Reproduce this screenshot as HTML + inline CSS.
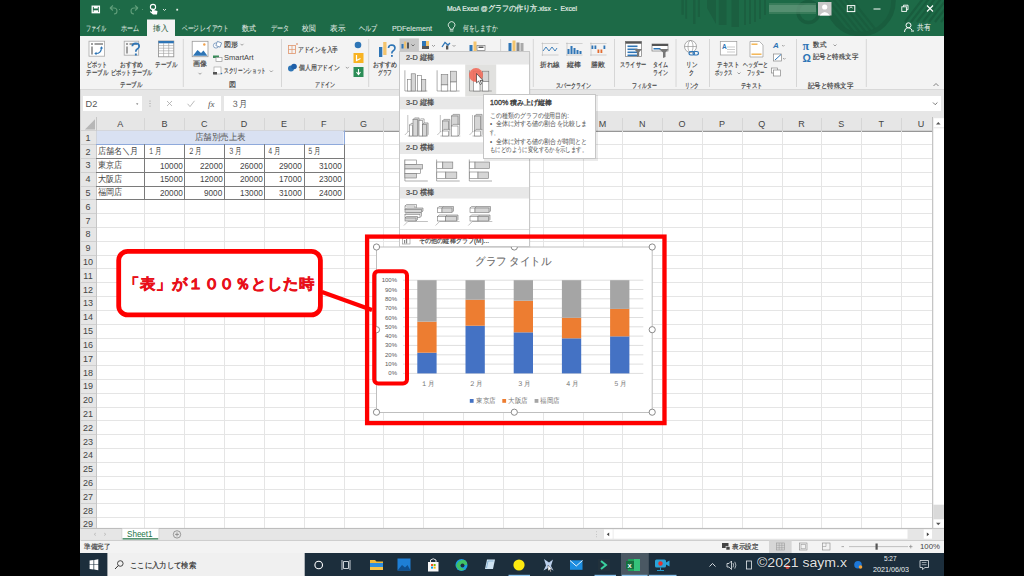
<!DOCTYPE html><html><head><meta charset="utf-8"><style>
*{margin:0;padding:0;box-sizing:border-box}
html,body{width:1024px;height:576px;overflow:hidden;background:#000}
body{position:relative;font-family:"Liberation Sans",sans-serif;color:#444}
.a{position:absolute}
.t{position:absolute;white-space:nowrap;line-height:1}
.f{display:inline-block;transform-origin:0 50%;-webkit-text-stroke:0.2px}
svg{position:absolute;overflow:visible}
</style></head><body>
<div class="a" style="left:80px;top:0;width:864px;height:36px;background:#1d6a47"></div>
<div class="a" style="left:80px;top:36px;width:864px;height:54px;background:#f3f3f3;border-bottom:1px solid #d8d8d8"></div>
<div class="a" style="left:80px;top:90px;width:864px;height:27px;background:#e6e6e6"></div>
<svg class="a" style="left:0;top:0" width="1024" height="576"><rect x="80" y="117" width="852.4" height="14.2" fill="#e6e6e6"/><rect x="80" y="117" width="16" height="411" fill="#e6e6e6"/><rect x="96.5" y="131.5" width="836" height="396.5" fill="#fff"/><line x1="144.5" y1="131" x2="144.5" y2="528" stroke="#e5e5e5" stroke-width="1"/><line x1="144.5" y1="118" x2="144.5" y2="130" stroke="#d6d6d6" stroke-width="1"/><line x1="184.5" y1="131" x2="184.5" y2="528" stroke="#e5e5e5" stroke-width="1"/><line x1="184.5" y1="118" x2="184.5" y2="130" stroke="#d6d6d6" stroke-width="1"/><line x1="224.5" y1="131" x2="224.5" y2="528" stroke="#e5e5e5" stroke-width="1"/><line x1="224.5" y1="118" x2="224.5" y2="130" stroke="#d6d6d6" stroke-width="1"/><line x1="264.5" y1="131" x2="264.5" y2="528" stroke="#e5e5e5" stroke-width="1"/><line x1="264.5" y1="118" x2="264.5" y2="130" stroke="#d6d6d6" stroke-width="1"/><line x1="304.5" y1="131" x2="304.5" y2="528" stroke="#e5e5e5" stroke-width="1"/><line x1="304.5" y1="118" x2="304.5" y2="130" stroke="#d6d6d6" stroke-width="1"/><line x1="344.5" y1="131" x2="344.5" y2="528" stroke="#e5e5e5" stroke-width="1"/><line x1="344.5" y1="118" x2="344.5" y2="130" stroke="#d6d6d6" stroke-width="1"/><line x1="383.5" y1="131" x2="383.5" y2="528" stroke="#e5e5e5" stroke-width="1"/><line x1="383.5" y1="118" x2="383.5" y2="130" stroke="#d6d6d6" stroke-width="1"/><line x1="423.5" y1="131" x2="423.5" y2="528" stroke="#e5e5e5" stroke-width="1"/><line x1="423.5" y1="118" x2="423.5" y2="130" stroke="#d6d6d6" stroke-width="1"/><line x1="463.5" y1="131" x2="463.5" y2="528" stroke="#e5e5e5" stroke-width="1"/><line x1="463.5" y1="118" x2="463.5" y2="130" stroke="#d6d6d6" stroke-width="1"/><line x1="503.5" y1="131" x2="503.5" y2="528" stroke="#e5e5e5" stroke-width="1"/><line x1="503.5" y1="118" x2="503.5" y2="130" stroke="#d6d6d6" stroke-width="1"/><line x1="543.5" y1="131" x2="543.5" y2="528" stroke="#e5e5e5" stroke-width="1"/><line x1="543.5" y1="118" x2="543.5" y2="130" stroke="#d6d6d6" stroke-width="1"/><line x1="583.5" y1="131" x2="583.5" y2="528" stroke="#e5e5e5" stroke-width="1"/><line x1="583.5" y1="118" x2="583.5" y2="130" stroke="#d6d6d6" stroke-width="1"/><line x1="622.5" y1="131" x2="622.5" y2="528" stroke="#e5e5e5" stroke-width="1"/><line x1="622.5" y1="118" x2="622.5" y2="130" stroke="#d6d6d6" stroke-width="1"/><line x1="662.5" y1="131" x2="662.5" y2="528" stroke="#e5e5e5" stroke-width="1"/><line x1="662.5" y1="118" x2="662.5" y2="130" stroke="#d6d6d6" stroke-width="1"/><line x1="702.5" y1="131" x2="702.5" y2="528" stroke="#e5e5e5" stroke-width="1"/><line x1="702.5" y1="118" x2="702.5" y2="130" stroke="#d6d6d6" stroke-width="1"/><line x1="742.5" y1="131" x2="742.5" y2="528" stroke="#e5e5e5" stroke-width="1"/><line x1="742.5" y1="118" x2="742.5" y2="130" stroke="#d6d6d6" stroke-width="1"/><line x1="782.5" y1="131" x2="782.5" y2="528" stroke="#e5e5e5" stroke-width="1"/><line x1="782.5" y1="118" x2="782.5" y2="130" stroke="#d6d6d6" stroke-width="1"/><line x1="821.5" y1="131" x2="821.5" y2="528" stroke="#e5e5e5" stroke-width="1"/><line x1="821.5" y1="118" x2="821.5" y2="130" stroke="#d6d6d6" stroke-width="1"/><line x1="861.5" y1="131" x2="861.5" y2="528" stroke="#e5e5e5" stroke-width="1"/><line x1="861.5" y1="118" x2="861.5" y2="130" stroke="#d6d6d6" stroke-width="1"/><line x1="901.5" y1="131" x2="901.5" y2="528" stroke="#e5e5e5" stroke-width="1"/><line x1="901.5" y1="118" x2="901.5" y2="130" stroke="#d6d6d6" stroke-width="1"/><line x1="96" y1="144.5" x2="932" y2="144.5" stroke="#e5e5e5" stroke-width="1"/><line x1="80" y1="144.5" x2="96" y2="144.5" stroke="#cfcfcf" stroke-width="1"/><line x1="96" y1="158.5" x2="932" y2="158.5" stroke="#e5e5e5" stroke-width="1"/><line x1="80" y1="158.5" x2="96" y2="158.5" stroke="#cfcfcf" stroke-width="1"/><line x1="96" y1="172.5" x2="932" y2="172.5" stroke="#e5e5e5" stroke-width="1"/><line x1="80" y1="172.5" x2="96" y2="172.5" stroke="#cfcfcf" stroke-width="1"/><line x1="96" y1="186.5" x2="932" y2="186.5" stroke="#e5e5e5" stroke-width="1"/><line x1="80" y1="186.5" x2="96" y2="186.5" stroke="#cfcfcf" stroke-width="1"/><line x1="96" y1="199.5" x2="932" y2="199.5" stroke="#e5e5e5" stroke-width="1"/><line x1="80" y1="199.5" x2="96" y2="199.5" stroke="#cfcfcf" stroke-width="1"/><line x1="96" y1="213.5" x2="932" y2="213.5" stroke="#e5e5e5" stroke-width="1"/><line x1="80" y1="213.5" x2="96" y2="213.5" stroke="#cfcfcf" stroke-width="1"/><line x1="96" y1="227.5" x2="932" y2="227.5" stroke="#e5e5e5" stroke-width="1"/><line x1="80" y1="227.5" x2="96" y2="227.5" stroke="#cfcfcf" stroke-width="1"/><line x1="96" y1="241.5" x2="932" y2="241.5" stroke="#e5e5e5" stroke-width="1"/><line x1="80" y1="241.5" x2="96" y2="241.5" stroke="#cfcfcf" stroke-width="1"/><line x1="96" y1="255.5" x2="932" y2="255.5" stroke="#e5e5e5" stroke-width="1"/><line x1="80" y1="255.5" x2="96" y2="255.5" stroke="#cfcfcf" stroke-width="1"/><line x1="96" y1="268.5" x2="932" y2="268.5" stroke="#e5e5e5" stroke-width="1"/><line x1="80" y1="268.5" x2="96" y2="268.5" stroke="#cfcfcf" stroke-width="1"/><line x1="96" y1="282.5" x2="932" y2="282.5" stroke="#e5e5e5" stroke-width="1"/><line x1="80" y1="282.5" x2="96" y2="282.5" stroke="#cfcfcf" stroke-width="1"/><line x1="96" y1="296.5" x2="932" y2="296.5" stroke="#e5e5e5" stroke-width="1"/><line x1="80" y1="296.5" x2="96" y2="296.5" stroke="#cfcfcf" stroke-width="1"/><line x1="96" y1="310.5" x2="932" y2="310.5" stroke="#e5e5e5" stroke-width="1"/><line x1="80" y1="310.5" x2="96" y2="310.5" stroke="#cfcfcf" stroke-width="1"/><line x1="96" y1="324.5" x2="932" y2="324.5" stroke="#e5e5e5" stroke-width="1"/><line x1="80" y1="324.5" x2="96" y2="324.5" stroke="#cfcfcf" stroke-width="1"/><line x1="96" y1="338.5" x2="932" y2="338.5" stroke="#e5e5e5" stroke-width="1"/><line x1="80" y1="338.5" x2="96" y2="338.5" stroke="#cfcfcf" stroke-width="1"/><line x1="96" y1="351.5" x2="932" y2="351.5" stroke="#e5e5e5" stroke-width="1"/><line x1="80" y1="351.5" x2="96" y2="351.5" stroke="#cfcfcf" stroke-width="1"/><line x1="96" y1="365.5" x2="932" y2="365.5" stroke="#e5e5e5" stroke-width="1"/><line x1="80" y1="365.5" x2="96" y2="365.5" stroke="#cfcfcf" stroke-width="1"/><line x1="96" y1="379.5" x2="932" y2="379.5" stroke="#e5e5e5" stroke-width="1"/><line x1="80" y1="379.5" x2="96" y2="379.5" stroke="#cfcfcf" stroke-width="1"/><line x1="96" y1="393.5" x2="932" y2="393.5" stroke="#e5e5e5" stroke-width="1"/><line x1="80" y1="393.5" x2="96" y2="393.5" stroke="#cfcfcf" stroke-width="1"/><line x1="96" y1="407.5" x2="932" y2="407.5" stroke="#e5e5e5" stroke-width="1"/><line x1="80" y1="407.5" x2="96" y2="407.5" stroke="#cfcfcf" stroke-width="1"/><line x1="96" y1="420.5" x2="932" y2="420.5" stroke="#e5e5e5" stroke-width="1"/><line x1="80" y1="420.5" x2="96" y2="420.5" stroke="#cfcfcf" stroke-width="1"/><line x1="96" y1="434.5" x2="932" y2="434.5" stroke="#e5e5e5" stroke-width="1"/><line x1="80" y1="434.5" x2="96" y2="434.5" stroke="#cfcfcf" stroke-width="1"/><line x1="96" y1="448.5" x2="932" y2="448.5" stroke="#e5e5e5" stroke-width="1"/><line x1="80" y1="448.5" x2="96" y2="448.5" stroke="#cfcfcf" stroke-width="1"/><line x1="96" y1="462.5" x2="932" y2="462.5" stroke="#e5e5e5" stroke-width="1"/><line x1="80" y1="462.5" x2="96" y2="462.5" stroke="#cfcfcf" stroke-width="1"/><line x1="96" y1="476.5" x2="932" y2="476.5" stroke="#e5e5e5" stroke-width="1"/><line x1="80" y1="476.5" x2="96" y2="476.5" stroke="#cfcfcf" stroke-width="1"/><line x1="96" y1="489.5" x2="932" y2="489.5" stroke="#e5e5e5" stroke-width="1"/><line x1="80" y1="489.5" x2="96" y2="489.5" stroke="#cfcfcf" stroke-width="1"/><line x1="96" y1="503.5" x2="932" y2="503.5" stroke="#e5e5e5" stroke-width="1"/><line x1="80" y1="503.5" x2="96" y2="503.5" stroke="#cfcfcf" stroke-width="1"/><line x1="96" y1="517.5" x2="932" y2="517.5" stroke="#e5e5e5" stroke-width="1"/><line x1="80" y1="517.5" x2="96" y2="517.5" stroke="#cfcfcf" stroke-width="1"/><line x1="96" y1="531.5" x2="932" y2="531.5" stroke="#e5e5e5" stroke-width="1"/><line x1="80" y1="531.5" x2="96" y2="531.5" stroke="#cfcfcf" stroke-width="1"/><line x1="80" y1="130.5" x2="932" y2="130.5" stroke="#d2d2d2" stroke-width="1"/><line x1="96.5" y1="117" x2="96.5" y2="528" stroke="#c6c6c6" stroke-width="1"/><line x1="80.5" y1="89" x2="80.5" y2="553" stroke="#cfcfcf" stroke-width="1"/><polygon points="95,119.3 95,129.5 84.9,129.5" fill="#b7b7b7"/></svg>
<div class="a" style="left:0;top:0;font-size:9px;color:#444">
<div class="t" style="left:96.0px;top:119.6px;width:48.5px;text-align:center">A</div>
<div class="t" style="left:144.5px;top:119.6px;width:39.8px;text-align:center">B</div>
<div class="t" style="left:184.3px;top:119.6px;width:39.8px;text-align:center">C</div>
<div class="t" style="left:224.1px;top:119.6px;width:39.8px;text-align:center">D</div>
<div class="t" style="left:264.0px;top:119.6px;width:39.8px;text-align:center">E</div>
<div class="t" style="left:303.8px;top:119.6px;width:39.8px;text-align:center">F</div>
<div class="t" style="left:343.6px;top:119.6px;width:39.8px;text-align:center">G</div>
<div class="t" style="left:383.4px;top:119.6px;width:39.8px;text-align:center">H</div>
<div class="t" style="left:423.2px;top:119.6px;width:39.8px;text-align:center">I</div>
<div class="t" style="left:463.1px;top:119.6px;width:39.8px;text-align:center">J</div>
<div class="t" style="left:502.9px;top:119.6px;width:39.8px;text-align:center">K</div>
<div class="t" style="left:542.7px;top:119.6px;width:39.8px;text-align:center">L</div>
<div class="t" style="left:582.5px;top:119.6px;width:39.8px;text-align:center">M</div>
<div class="t" style="left:622.3px;top:119.6px;width:39.8px;text-align:center">N</div>
<div class="t" style="left:662.2px;top:119.6px;width:39.8px;text-align:center">O</div>
<div class="t" style="left:702.0px;top:119.6px;width:39.8px;text-align:center">P</div>
<div class="t" style="left:741.8px;top:119.6px;width:39.8px;text-align:center">Q</div>
<div class="t" style="left:781.6px;top:119.6px;width:39.8px;text-align:center">R</div>
<div class="t" style="left:821.4px;top:119.6px;width:39.8px;text-align:center">S</div>
<div class="t" style="left:861.3px;top:119.6px;width:39.8px;text-align:center">T</div>
<div class="t" style="left:901.1px;top:119.6px;width:39.8px;text-align:center">U</div>
<div class="t" style="left:80px;top:133.7px;width:16px;text-align:center">1</div>
<div class="t" style="left:80px;top:147.5px;width:16px;text-align:center">2</div>
<div class="t" style="left:80px;top:161.3px;width:16px;text-align:center">3</div>
<div class="t" style="left:80px;top:175.1px;width:16px;text-align:center">4</div>
<div class="t" style="left:80px;top:188.9px;width:16px;text-align:center">5</div>
<div class="t" style="left:80px;top:202.8px;width:16px;text-align:center">6</div>
<div class="t" style="left:80px;top:216.6px;width:16px;text-align:center">7</div>
<div class="t" style="left:80px;top:230.4px;width:16px;text-align:center">8</div>
<div class="t" style="left:80px;top:244.2px;width:16px;text-align:center">9</div>
<div class="t" style="left:80px;top:258.0px;width:16px;text-align:center">10</div>
<div class="t" style="left:80px;top:271.8px;width:16px;text-align:center">11</div>
<div class="t" style="left:80px;top:285.6px;width:16px;text-align:center">12</div>
<div class="t" style="left:80px;top:299.4px;width:16px;text-align:center">13</div>
<div class="t" style="left:80px;top:313.2px;width:16px;text-align:center">14</div>
<div class="t" style="left:80px;top:327.0px;width:16px;text-align:center">15</div>
<div class="t" style="left:80px;top:340.9px;width:16px;text-align:center">16</div>
<div class="t" style="left:80px;top:354.7px;width:16px;text-align:center">17</div>
<div class="t" style="left:80px;top:368.5px;width:16px;text-align:center">18</div>
<div class="t" style="left:80px;top:382.3px;width:16px;text-align:center">19</div>
<div class="t" style="left:80px;top:396.1px;width:16px;text-align:center">20</div>
<div class="t" style="left:80px;top:409.9px;width:16px;text-align:center">21</div>
<div class="t" style="left:80px;top:423.7px;width:16px;text-align:center">22</div>
<div class="t" style="left:80px;top:437.5px;width:16px;text-align:center">23</div>
<div class="t" style="left:80px;top:451.3px;width:16px;text-align:center">24</div>
<div class="t" style="left:80px;top:465.1px;width:16px;text-align:center">25</div>
<div class="t" style="left:80px;top:478.9px;width:16px;text-align:center">26</div>
<div class="t" style="left:80px;top:492.8px;width:16px;text-align:center">27</div>
<div class="t" style="left:80px;top:506.6px;width:16px;text-align:center">28</div>
<div class="t" style="left:80px;top:520.4px;width:16px;text-align:center">29</div>
</div>
<svg class="a" style="left:0;top:0" width="1024" height="576"><rect x="96.5" y="130.7" width="247.1" height="13.5" fill="#d9e1f2"/><line x1="96" y1="144.5" x2="343.6" y2="144.5" stroke="#8ea9db" stroke-width="1"/><line x1="96" y1="158.5" x2="344.1" y2="158.5" stroke="#7a7a7a" stroke-width="1"/><line x1="96" y1="172.5" x2="344.1" y2="172.5" stroke="#7a7a7a" stroke-width="1"/><line x1="96" y1="186.5" x2="344.1" y2="186.5" stroke="#7a7a7a" stroke-width="1"/><line x1="96" y1="199.5" x2="344.1" y2="199.5" stroke="#7a7a7a" stroke-width="1"/><line x1="144.5" y1="144.2" x2="144.5" y2="199.9" stroke="#7a7a7a" stroke-width="1"/><line x1="184.5" y1="144.2" x2="184.5" y2="199.9" stroke="#7a7a7a" stroke-width="1"/><line x1="224.5" y1="144.2" x2="224.5" y2="199.9" stroke="#7a7a7a" stroke-width="1"/><line x1="264.5" y1="144.2" x2="264.5" y2="199.9" stroke="#7a7a7a" stroke-width="1"/><line x1="304.5" y1="144.2" x2="304.5" y2="199.9" stroke="#7a7a7a" stroke-width="1"/><line x1="344.5" y1="144.2" x2="344.5" y2="199.9" stroke="#7a7a7a" stroke-width="1"/><line x1="344.5" y1="130.4" x2="344.5" y2="144.2" stroke="#8ea9db" stroke-width="1"/></svg>
<span class="t f" style="transform:scaleX(0.9389);left:194.7px;top:133.1px;font-size:9px;color:#555;--w:50.7px;-webkit-text-stroke:0">店舗別売上表</span>
<span class="t f" style="transform:scaleX(0.9022);left:98.2px;top:146.9px;font-size:9px;color:#444;--w:40.6px;-webkit-text-stroke:0">店舗名＼月</span>
<span class="t f" style="transform:scaleX(0.7222);left:147.9px;top:146.9px;font-size:9px;color:#444;--w:13px;-webkit-text-stroke:0">１月</span>
<span class="t f" style="transform:scaleX(0.7222);left:187.7px;top:146.9px;font-size:9px;color:#444;--w:13px;-webkit-text-stroke:0">２月</span>
<span class="t f" style="transform:scaleX(0.7222);left:227.5px;top:146.9px;font-size:9px;color:#444;--w:13px;-webkit-text-stroke:0">３月</span>
<span class="t f" style="transform:scaleX(0.7222);left:267.4px;top:146.9px;font-size:9px;color:#444;--w:13px;-webkit-text-stroke:0">４月</span>
<span class="t f" style="transform:scaleX(0.7222);left:307.2px;top:146.9px;font-size:9px;color:#444;--w:13px;-webkit-text-stroke:0">５月</span>
<span class="t f" style="transform:scaleX(0.9000);left:98.2px;top:160.7px;font-size:9px;color:#444;--w:24.3px;-webkit-text-stroke:0">東京店</span>
<span class="t f" style="transform:scaleX(0.8743);left:159.8px;top:160.5px;font-size:9.4px;color:#444;--w:22.8px;-webkit-text-stroke:0">10000</span>
<span class="t f" style="transform:scaleX(0.8743);left:199.6px;top:160.5px;font-size:9.4px;color:#444;--w:22.8px;-webkit-text-stroke:0">22000</span>
<span class="t f" style="transform:scaleX(0.8743);left:239.5px;top:160.5px;font-size:9.4px;color:#444;--w:22.8px;-webkit-text-stroke:0">26000</span>
<span class="t f" style="transform:scaleX(0.8743);left:279.3px;top:160.5px;font-size:9.4px;color:#444;--w:22.8px;-webkit-text-stroke:0">29000</span>
<span class="t f" style="transform:scaleX(0.8743);left:319.1px;top:160.5px;font-size:9.4px;color:#444;--w:22.8px;-webkit-text-stroke:0">31000</span>
<span class="t f" style="transform:scaleX(0.9000);left:98.2px;top:174.5px;font-size:9px;color:#444;--w:24.3px;-webkit-text-stroke:0">大阪店</span>
<span class="t f" style="transform:scaleX(0.8743);left:159.8px;top:174.3px;font-size:9.4px;color:#444;--w:22.8px;-webkit-text-stroke:0">15000</span>
<span class="t f" style="transform:scaleX(0.8743);left:199.6px;top:174.3px;font-size:9.4px;color:#444;--w:22.8px;-webkit-text-stroke:0">12000</span>
<span class="t f" style="transform:scaleX(0.8743);left:239.5px;top:174.3px;font-size:9.4px;color:#444;--w:22.8px;-webkit-text-stroke:0">20000</span>
<span class="t f" style="transform:scaleX(0.8743);left:279.3px;top:174.3px;font-size:9.4px;color:#444;--w:22.8px;-webkit-text-stroke:0">17000</span>
<span class="t f" style="transform:scaleX(0.8743);left:319.1px;top:174.3px;font-size:9.4px;color:#444;--w:22.8px;-webkit-text-stroke:0">23000</span>
<span class="t f" style="transform:scaleX(0.9000);left:98.2px;top:188.3px;font-size:9px;color:#444;--w:24.3px;-webkit-text-stroke:0">福岡店</span>
<span class="t f" style="transform:scaleX(0.8743);left:159.8px;top:188.1px;font-size:9.4px;color:#444;--w:22.8px;-webkit-text-stroke:0">20000</span>
<span class="t f" style="transform:scaleX(0.8725);left:204.2px;top:188.1px;font-size:9.4px;color:#444;--w:18.2px;-webkit-text-stroke:0">9000</span>
<span class="t f" style="transform:scaleX(0.8743);left:239.5px;top:188.1px;font-size:9.4px;color:#444;--w:22.8px;-webkit-text-stroke:0">13000</span>
<span class="t f" style="transform:scaleX(0.8743);left:279.3px;top:188.1px;font-size:9.4px;color:#444;--w:22.8px;-webkit-text-stroke:0">31000</span>
<span class="t f" style="transform:scaleX(0.8743);left:319.1px;top:188.1px;font-size:9.4px;color:#444;--w:22.8px;-webkit-text-stroke:0">24000</span>
<svg class="a" style="left:0;top:0" width="1024" height="576"><rect x="376.5" y="247" width="275.7" height="165.5" fill="#fff" stroke="#bfbfbf" stroke-width="1"/><line x1="403" y1="373.4" x2="643.3" y2="373.4" stroke="#dedede" stroke-width="1"/><line x1="403" y1="364.1" x2="643.3" y2="364.1" stroke="#dedede" stroke-width="1"/><line x1="403" y1="354.8" x2="643.3" y2="354.8" stroke="#dedede" stroke-width="1"/><line x1="403" y1="345.4" x2="643.3" y2="345.4" stroke="#dedede" stroke-width="1"/><line x1="403" y1="336.1" x2="643.3" y2="336.1" stroke="#dedede" stroke-width="1"/><line x1="403" y1="326.8" x2="643.3" y2="326.8" stroke="#dedede" stroke-width="1"/><line x1="403" y1="317.5" x2="643.3" y2="317.5" stroke="#dedede" stroke-width="1"/><line x1="403" y1="308.2" x2="643.3" y2="308.2" stroke="#dedede" stroke-width="1"/><line x1="403" y1="298.8" x2="643.3" y2="298.8" stroke="#dedede" stroke-width="1"/><line x1="403" y1="289.5" x2="643.3" y2="289.5" stroke="#dedede" stroke-width="1"/><line x1="403" y1="280.2" x2="643.3" y2="280.2" stroke="#dedede" stroke-width="1"/><rect x="417.3" y="352.69" width="19.3" height="20.71" fill="#4472c4"/><rect x="417.3" y="321.62" width="19.3" height="31.07" fill="#ed7d31"/><rect x="417.3" y="280.20" width="19.3" height="41.42" fill="#a5a5a5"/><rect x="465.5" y="325.72" width="19.3" height="47.68" fill="#4472c4"/><rect x="465.5" y="299.71" width="19.3" height="26.01" fill="#ed7d31"/><rect x="465.5" y="280.20" width="19.3" height="19.51" fill="#a5a5a5"/><rect x="513.7" y="332.33" width="19.3" height="41.07" fill="#4472c4"/><rect x="513.7" y="300.74" width="19.3" height="31.59" fill="#ed7d31"/><rect x="513.7" y="280.20" width="19.3" height="20.54" fill="#a5a5a5"/><rect x="561.9" y="338.30" width="19.3" height="35.10" fill="#4472c4"/><rect x="561.9" y="317.72" width="19.3" height="20.58" fill="#ed7d31"/><rect x="561.9" y="280.20" width="19.3" height="37.52" fill="#a5a5a5"/><rect x="610.1" y="336.36" width="19.3" height="37.04" fill="#4472c4"/><rect x="610.1" y="308.88" width="19.3" height="27.48" fill="#ed7d31"/><rect x="610.1" y="280.20" width="19.3" height="28.68" fill="#a5a5a5"/><circle cx="376.5" cy="247" r="3.1" fill="#fff" stroke="#8a8a8a" stroke-width="1"/><circle cx="514.3" cy="247" r="3.1" fill="#fff" stroke="#8a8a8a" stroke-width="1"/><circle cx="652.2" cy="247" r="3.1" fill="#fff" stroke="#8a8a8a" stroke-width="1"/><circle cx="376.5" cy="329.7" r="3.1" fill="#fff" stroke="#8a8a8a" stroke-width="1"/><circle cx="652.2" cy="329.7" r="3.1" fill="#fff" stroke="#8a8a8a" stroke-width="1"/><circle cx="376.5" cy="412.2" r="3.1" fill="#fff" stroke="#8a8a8a" stroke-width="1"/><circle cx="514.3" cy="412.2" r="3.1" fill="#fff" stroke="#8a8a8a" stroke-width="1"/><circle cx="652.2" cy="412.2" r="3.1" fill="#fff" stroke="#8a8a8a" stroke-width="1"/></svg>
<div class="a" style="left:0;top:0;font-size:6px;color:#595959">
<span class="t f" style="transform:scaleX(0.9555);left:475.3px;top:255.9px;font-size:11px;color:#6a6a6a;--w:76.5px;-webkit-text-stroke:0.1px">グラフ タイトル</span>
<div class="t" style="left:370px;top:370.4px;width:27px;text-align:right">0%</div>
<div class="t" style="left:370px;top:361.1px;width:27px;text-align:right">10%</div>
<div class="t" style="left:370px;top:351.8px;width:27px;text-align:right">20%</div>
<div class="t" style="left:370px;top:342.4px;width:27px;text-align:right">30%</div>
<div class="t" style="left:370px;top:333.1px;width:27px;text-align:right">40%</div>
<div class="t" style="left:370px;top:323.8px;width:27px;text-align:right">50%</div>
<div class="t" style="left:370px;top:314.5px;width:27px;text-align:right">60%</div>
<div class="t" style="left:370px;top:305.2px;width:27px;text-align:right">70%</div>
<div class="t" style="left:370px;top:295.8px;width:27px;text-align:right">80%</div>
<div class="t" style="left:370px;top:286.5px;width:27px;text-align:right">90%</div>
<div class="t" style="left:370px;top:277.2px;width:27px;text-align:right">100%</div>
<span class="t f" style="transform:scaleX(0.9286);left:420.5px;top:380.3px;font-size:7px;color:#707070;--w:13px;-webkit-text-stroke:0">１月</span>
<span class="t f" style="transform:scaleX(0.9286);left:468.7px;top:380.3px;font-size:7px;color:#707070;--w:13px;-webkit-text-stroke:0">２月</span>
<span class="t f" style="transform:scaleX(0.9286);left:516.9px;top:380.3px;font-size:7px;color:#707070;--w:13px;-webkit-text-stroke:0">３月</span>
<span class="t f" style="transform:scaleX(0.9286);left:565.1px;top:380.3px;font-size:7px;color:#707070;--w:13px;-webkit-text-stroke:0">４月</span>
<span class="t f" style="transform:scaleX(0.9286);left:613.3px;top:380.3px;font-size:7px;color:#707070;--w:13px;-webkit-text-stroke:0">５月</span>
<svg class="a" style="left:0;top:0" width="1024" height="576"><rect x="469.8" y="399" width="3.8" height="3.8" fill="#4472c4"/><rect x="502.3" y="399" width="3.8" height="3.8" fill="#ed7d31"/><rect x="534.6" y="399" width="3.8" height="3.8" fill="#a5a5a5"/></svg>
<span class="t f" style="transform:scaleX(0.9286);left:476.0px;top:397.3px;font-size:7px;color:#777;--w:19.5px;-webkit-text-stroke:0">東京店</span>
<span class="t f" style="transform:scaleX(0.9286);left:508.0px;top:397.3px;font-size:7px;color:#777;--w:19.5px;-webkit-text-stroke:0">大阪店</span>
<span class="t f" style="transform:scaleX(0.9286);left:540.2px;top:397.3px;font-size:7px;color:#777;--w:19.5px;-webkit-text-stroke:0">福岡店</span>
</div>
<svg class="a" style="left:0;top:0" width="1024" height="576"><defs><clipPath id="tc"><rect x="80" y="0" width="864" height="36"/></clipPath><clipPath id="bc"><circle cx="860.5" cy="1" r="33"/></clipPath></defs><g clip-path="url(#tc)"><circle cx="860.5" cy="1" r="33" fill="#1b6443"/><g clip-path="url(#bc)" stroke="#195d3e" stroke-width="2.2"><line x1="796" y1="-10" x2="836" y2="40"/><line x1="802" y1="-10" x2="842" y2="40"/><line x1="808" y1="-10" x2="848" y2="40"/><line x1="814" y1="-10" x2="854" y2="40"/><line x1="820" y1="-10" x2="860" y2="40"/><line x1="826" y1="-10" x2="866" y2="40"/><line x1="832" y1="-10" x2="872" y2="40"/><line x1="838" y1="-10" x2="878" y2="40"/><line x1="844" y1="-10" x2="884" y2="40"/></g><circle cx="860.5" cy="1" r="33" fill="none" stroke="#195d3e" stroke-width="4.5"/><circle cx="808.5" cy="12" r="10.5" fill="none" stroke="#195d3e" stroke-width="3.5"/><g stroke="#195d3e" stroke-width="2.2"><line x1="905" y1="22" x2="925" y2="-4"/><line x1="911" y1="22" x2="931" y2="-4"/><line x1="917" y1="22" x2="937" y2="-4"/><line x1="923" y1="22" x2="943" y2="-4"/><line x1="929" y1="22" x2="949" y2="-4"/><line x1="935" y1="22" x2="955" y2="-4"/><line x1="941" y1="22" x2="961" y2="-4"/></g><g fill="#1b5f40"><rect x="681.4" y="0" width="2.4" height="14.8"/><rect x="685.3" y="0" width="1.8" height="18.8"/><rect x="693" y="0" width="2.5" height="24"/><rect x="697.8" y="0" width="2.2" height="17"/><path d="M707 0 H716 V24 L707 8Z"/><rect x="718.8" y="0" width="7.7" height="25"/><rect x="731.5" y="0" width="7.5" height="27"/><rect x="744" y="0" width="2" height="25"/><rect x="749" y="0" width="2" height="24"/><rect x="754" y="0" width="2" height="22"/><rect x="759" y="0" width="2" height="19"/><rect x="764" y="0" width="2" height="15"/></g></g><g fill="none" stroke="#fff" stroke-width="1.3"><rect x="92.2" y="6.2" width="7.2" height="6.5"/></g><rect x="93.8" y="6.2" width="4" height="2.3" fill="#fff"/><rect x="93.5" y="10.3" width="4.6" height="2.4" fill="#fff"/><path d="M110 8 L113 5.5 M110 8 L113 10.5 M110 8 H114 A3 3 0 0 1 114 14" fill="none" stroke="#5f9d79" stroke-width="1.1"/><path d="M138 8 L135 5.5 M138 8 L135 10.5 M138 8 H134 A3 3 0 0 0 134 14" fill="none" stroke="#5f9d79" stroke-width="1.1"/><circle cx="119.5" cy="9.5" r="0.6" fill="#5f9d79"/><circle cx="142.5" cy="9.5" r="0.6" fill="#5f9d79"/><circle cx="153" cy="7" r="2.6" fill="none" stroke="#fff" stroke-width="1.1"/><path d="M152 8 V12 L150.5 11 L150 12 L153 14.5 H157 L157.5 11 L153.5 10" fill="#fff"/><path d="M163 9 L164.5 10.5 L166 9" fill="none" stroke="#e8f0ea" stroke-width="0.9"/><rect x="176.3" y="8.8" width="1.8" height="1.8" fill="#e8f0ea"/><rect x="147" y="19.5" width="28" height="17" fill="#f3f3f3"/><rect x="769" y="3" width="47" height="11" fill="#4f8a69" opacity="0.55"/><rect x="769" y="5" width="47" height="7" fill="#7aa78e" opacity="0.45"/><rect x="818" y="2" width="13.5" height="13.5" fill="#c8c8c8"/><circle cx="824.7" cy="7" r="2.6" fill="#fff"/><path d="M819.5 15.5 Q824.7 8.5 830 15.5Z" fill="#fff"/><rect x="847.3" y="5.6" width="7.5" height="6" fill="none" stroke="#fff" stroke-width="1"/><path d="M849.5 8 L851 6.8 L852.5 8" fill="none" stroke="#fff" stroke-width="0.9"/><line x1="873.5" y1="9" x2="880.5" y2="9" stroke="#fff" stroke-width="1"/><rect x="901.8" y="6.8" width="4.6" height="4.6" fill="none" stroke="#fff" stroke-width="0.9"/><path d="M903.5 6.8 V5.2 H908 V9.7 H906.4" fill="none" stroke="#fff" stroke-width="0.9"/><path d="M927 5.5 L933 11.5 M933 5.5 L927 11.5" stroke="#fff" stroke-width="1.1"/><circle cx="908.5" cy="25.3" r="2.5" fill="none" stroke="#fff" stroke-width="1"/><path d="M904.5 32 Q905 27.5 908.5 27.8 Q911 28 912 30" fill="none" stroke="#fff" stroke-width="1"/><path d="M911 31 H914" stroke="#fff" stroke-width="1"/></svg>
<span class="t f" style="transform:scaleX(0.8878);left:447.0px;top:5.2px;font-size:7.6px;color:#e7efe9;--w:130px;">MoA Excel @グラフの作り方.xlsx&nbsp; -&nbsp; Excel</span>
<span class="t f" style="transform:scaleX(0.6312);left:86.4px;top:24.5px;font-size:7.6px;color:#e3ede6;--w:20.2px;-webkit-text-stroke:0.05px">ファイル</span>
<span class="t f" style="transform:scaleX(0.7542);left:120.8px;top:24.5px;font-size:7.6px;color:#e3ede6;--w:18.1px;-webkit-text-stroke:0.05px">ホーム</span>
<span class="t f" style="transform:scaleX(0.9375);left:153.0px;top:24.5px;font-size:7.6px;color:#2f5f43;--w:15px;-webkit-text-stroke:0.05px">挿入</span>
<span class="t f" style="transform:scaleX(0.7032);left:181.8px;top:24.5px;font-size:7.6px;color:#e3ede6;--w:46.5px;-webkit-text-stroke:0.05px">ページ レイアウト</span>
<span class="t f" style="transform:scaleX(0.8625);left:242.4px;top:24.5px;font-size:7.6px;color:#e3ede6;--w:13.8px;-webkit-text-stroke:0.05px">数式</span>
<span class="t f" style="transform:scaleX(0.7542);left:271.2px;top:24.5px;font-size:7.6px;color:#e3ede6;--w:18.1px;-webkit-text-stroke:0.05px">データ</span>
<span class="t f" style="transform:scaleX(0.8313);left:302.2px;top:24.5px;font-size:7.6px;color:#e3ede6;--w:13.3px;-webkit-text-stroke:0.05px">校閲</span>
<span class="t f" style="transform:scaleX(0.9375);left:330.0px;top:24.5px;font-size:7.6px;color:#e3ede6;--w:15px;-webkit-text-stroke:0.05px">表示</span>
<span class="t f" style="transform:scaleX(0.7542);left:359.3px;top:24.5px;font-size:7.6px;color:#e3ede6;--w:18.1px;-webkit-text-stroke:0.05px">ヘルプ</span>
<span class="t f" style="transform:scaleX(0.9451);left:391.6px;top:24.5px;font-size:7.6px;color:#e3ede6;--w:39.9px;-webkit-text-stroke:0.05px">PDFelement</span>
<span class="t f" style="transform:scaleX(0.7146);left:462.5px;top:24.5px;font-size:7.6px;color:#e3ede6;--w:34.3px;-webkit-text-stroke:0.05px">何をしますか</span>
<span class="t f" style="transform:scaleX(0.8438);left:917.0px;top:24.2px;font-size:7.6px;color:#eef4f0;--w:13.5px;-webkit-text-stroke:0.05px">共有</span>
<svg class="a" style="left:0;top:0" width="1024" height="576"><path d="M449.8 31 H453.4 M450 29.3 V28 Q447.6 26.3 448.3 24.2 Q449.3 21.6 451.6 21.6 Q454 21.6 454.9 24.2 Q455.5 26.3 453.2 28 V29.3 Z" fill="none" stroke="#e8f0ea" stroke-width="0.9"/></svg>
<svg class="a" style="left:0;top:0" width="1024" height="576"><line x1="183.3" y1="39" x2="183.3" y2="87" stroke="#d6d6d6" stroke-width="1"/><line x1="281.5" y1="39" x2="281.5" y2="87" stroke="#d6d6d6" stroke-width="1"/><line x1="368.7" y1="39" x2="368.7" y2="87" stroke="#d6d6d6" stroke-width="1"/><line x1="533.3" y1="39" x2="533.3" y2="87" stroke="#d6d6d6" stroke-width="1"/><line x1="614.5" y1="39" x2="614.5" y2="87" stroke="#d6d6d6" stroke-width="1"/><line x1="676" y1="39" x2="676" y2="87" stroke="#d6d6d6" stroke-width="1"/><line x1="709.5" y1="39" x2="709.5" y2="87" stroke="#d6d6d6" stroke-width="1"/><line x1="796.5" y1="39" x2="796.5" y2="87" stroke="#d6d6d6" stroke-width="1"/><line x1="866.3" y1="39" x2="866.3" y2="87" stroke="#d6d6d6" stroke-width="1"/><line x1="500.6" y1="39" x2="500.6" y2="51" stroke="#d6d6d6" stroke-width="1"/><rect x="89" y="41.2" width="15.6" height="15" fill="#fff" stroke="#a8a8a8" stroke-width="0.8"/><rect x="91" y="43" width="2" height="2" fill="#a0a0a0"/><rect x="94.5" y="43" width="8.5" height="2" fill="#a0a0a0"/><rect x="91" y="46.5" width="2" height="8" fill="#a0a0a0"/><path d="M96 53.5 Q101 53.5 101.5 48" fill="none" stroke="#2e75b6" stroke-width="1.2"/><path d="M94.3 53.5 L96.5 51.8 L96.5 55.2Z M101.5 46.2 L99.8 48.5 L103.2 48.5Z" fill="#2e75b6"/><rect x="124.2" y="41.2" width="14.5" height="14" fill="#f6f6f6" stroke="#a8a8a8" stroke-width="0.8"/><rect x="126" y="43" width="2" height="2" fill="#a0a0a0"/><rect x="129.5" y="43" width="7.5" height="2" fill="#a0a0a0"/><rect x="126" y="46.5" width="2" height="7" fill="#a0a0a0"/><path d="M132.3 46.3 Q132.5 43.4 135.8 43.4 Q139.2 43.5 139.2 46.3 Q139.2 48.2 137 49.3 Q135.8 50 135.8 51.8" fill="none" stroke="#2e75b6" stroke-width="1.7"/><rect x="134.9" y="53.5" width="1.9" height="2" fill="#2e75b6"/><rect x="158.5" y="41" width="15.3" height="15.8" fill="#fff" stroke="#8c8c8c" stroke-width="0.8"/><rect x="158.5" y="41" width="15.3" height="2.3" fill="#2e75b6"/><line x1="158.5" y1="45.6" x2="173.8" y2="45.6" stroke="#9c9c9c" stroke-width="0.6"/><line x1="158.5" y1="48.2" x2="173.8" y2="48.2" stroke="#9c9c9c" stroke-width="0.6"/><line x1="158.5" y1="50.8" x2="173.8" y2="50.8" stroke="#9c9c9c" stroke-width="0.6"/><line x1="158.5" y1="53.4" x2="173.8" y2="53.4" stroke="#9c9c9c" stroke-width="0.6"/><line x1="163.6" y1="43" x2="163.6" y2="56.8" stroke="#9c9c9c" stroke-width="0.6"/><line x1="168.7" y1="43" x2="168.7" y2="56.8" stroke="#9c9c9c" stroke-width="0.6"/><rect x="192.2" y="41.3" width="15.8" height="15.4" fill="#fff" stroke="#9a9a9a" stroke-width="0.8"/><path d="M193 55.8 L197.5 50 L201 53 L203.5 50.5 L207.4 55.8Z" fill="#2e75b6"/><circle cx="204.3" cy="44.5" r="1.2" fill="#f0a04b"/><circle cx="216" cy="45.5" r="2.6" fill="#fff" stroke="#6d8fb8" stroke-width="0.8"/><rect x="216.5" y="42" width="4.5" height="4.5" fill="#fff" stroke="#6d8fb8" stroke-width="0.8" transform="rotate(20 218.7 44.2)"/><rect x="213" y="55.5" width="6" height="2.5" fill="#3b8c5a"/><rect x="216" y="57.5" width="6" height="4" fill="#fff" stroke="#9a9a9a" stroke-width="0.7"/><rect x="214" y="67" width="7" height="7" fill="#fff" stroke="#9a9a9a" stroke-width="0.6"/><rect x="213" y="72" width="4" height="2.5" fill="#555"/><circle cx="221.5" cy="73.5" r="0.8" fill="#2e75b6"/><rect x="288.5" y="45.5" width="7" height="8" fill="none" stroke="#e0956b" stroke-width="0.8"/><line x1="292" y1="45.5" x2="292" y2="53.5" stroke="#e0956b" stroke-width="0.7"/><line x1="288.5" y1="49.5" x2="295.5" y2="49.5" stroke="#e0956b" stroke-width="0.7"/><path d="M296 44 H298 M297 43 V45" stroke="#e0956b" stroke-width="0.7"/><circle cx="291" cy="68.5" r="3" fill="#2e75b6"/><circle cx="294" cy="66.5" r="2.8" fill="#1f5fa8"/><circle cx="358" cy="45" r="3.3" fill="#2e75b6"/><rect x="353.5" y="53" width="10" height="10" fill="#f8b322"/><path d="M356.5 55 V60.5 L360.5 58.5" fill="none" stroke="#fff" stroke-width="1.2"/><rect x="353.5" y="67" width="10" height="10" fill="#2c8d57"/><path d="M358.5 69 V74 M356.5 72 L358.5 74.5 L360.5 72" fill="none" stroke="#fff" stroke-width="1.1"/><rect x="379" y="47" width="3.3" height="10" fill="#2e75b6"/><rect x="383.2" y="42" width="3.3" height="13" fill="#f3c46d"/><path d="M388.5 48 Q388.7 45 391.8 45 Q395 45.2 395 48 Q395 50 393 51 Q391.8 51.7 391.8 53.5" fill="none" stroke="#2e75b6" stroke-width="1.6"/><rect x="391" y="55" width="1.8" height="1.8" fill="#2e75b6"/><rect x="399.5" y="38.4" width="19.4" height="12.6" fill="#c8c8c8"/><rect x="401.5" y="44" width="2" height="4.5" fill="#2e75b6"/><rect x="404.2" y="41.5" width="2" height="7" fill="#f3c46d"/><rect x="407" y="42.5" width="2" height="6" fill="#555"/><path d="M411.5 44.5 L413 46 L414.5 44.5" fill="none" stroke="#555" stroke-width="0.8"/><rect x="422" y="41" width="4" height="8" fill="#2e75b6"/><rect x="426" y="41" width="3" height="8" fill="#f3c46d"/><rect x="422" y="46" width="7" height="3" fill="#555"/><path d="M432 45 L433.5 46.5 L435 45" fill="none" stroke="#888" stroke-width="0.8"/><path d="M442 47 L445 42.5 L448 45 L450 43" fill="none" stroke="#2e75b6" stroke-width="1.3"/><rect x="446" y="45.5" width="2.3" height="4" fill="#555"/><path d="M452.5 45 L454 46.5 L455.5 45" fill="none" stroke="#888" stroke-width="0.8"/><rect x="469.5" y="45" width="3" height="6" fill="#2e75b6"/><rect x="473.5" y="41.5" width="3" height="9.5" fill="#f3c46d"/><rect x="477" y="45.5" width="8" height="5" fill="#fff" stroke="#777" stroke-width="0.7"/><rect x="478.5" y="46.5" width="5" height="1.5" fill="#555"/><rect x="508.5" y="43" width="3" height="8" fill="#2e75b6"/><rect x="512.5" y="40.5" width="3" height="10.5" fill="#f3c46d"/><rect x="516.5" y="42.5" width="3" height="8.5" fill="#888"/><rect x="520.5" y="43" width="3" height="8" fill="#aaa"/><path d="M541.5 43.5 H558.5 M541.5 55 H558.5 M542.5 42.5 V56" stroke="#bbb" stroke-width="0.6"/><path d="M543 51 L546 47 L549 51 L552 47 L555 51 L557 48" fill="none" stroke="#2e75b6" stroke-width="0.9"/><path d="M566 43.5 H582.5 M566 55 H582.5 M567 42.5 V56" stroke="#bbb" stroke-width="0.6"/><rect x="567.5" y="49" width="2" height="5" fill="#2e75b6"/><rect x="570.5" y="46" width="2" height="8" fill="#2e75b6"/><rect x="573.5" y="48" width="2" height="6" fill="#2e75b6"/><rect x="576.5" y="50" width="2" height="4" fill="#2e75b6"/><rect x="579.5" y="51" width="2" height="3" fill="#2e75b6"/><path d="M590 43.5 H606.5 M590 55 H606.5 M591 42.5 V56" stroke="#bbb" stroke-width="0.6"/><rect x="591.5" y="45.5" width="1.8" height="3.5" fill="#2e75b6"/><rect x="594.5" y="45.5" width="1.8" height="3.5" fill="#2e75b6"/><rect x="597.5" y="49.5" width="1.8" height="3.5" fill="#e36c2f"/><rect x="600.5" y="49.5" width="1.8" height="3.5" fill="#e36c2f"/><rect x="603.5" y="45.5" width="1.8" height="3.5" fill="#2e75b6"/><rect x="625.5" y="41.5" width="16" height="15" fill="#fff" stroke="#777" stroke-width="0.7"/><rect x="625.5" y="41.5" width="16" height="2.2" fill="#555"/><rect x="627.5" y="45.5" width="10" height="1.6" fill="#2e75b6"/><rect x="627.5" y="48.5" width="10" height="1.6" fill="#2e75b6"/><rect x="627.5" y="51.5" width="10" height="1.6" fill="#2e75b6"/><rect x="627.5" y="54.5" width="10" height="1.6" fill="#2e75b6"/><path d="M634 49 H642 L639.2 52.3 V56 L637 57 V52.3Z" fill="#777"/><rect x="652" y="44" width="16" height="7" fill="#fff" stroke="#777" stroke-width="0.7"/><rect x="652" y="44" width="16" height="2" fill="#555"/><rect x="653.5" y="48" width="7" height="1.5" fill="#2e75b6"/><path d="M659 49 H668.5 L665.5 52.5 V57 L663 58 V52.5Z" fill="#777"/><circle cx="690.5" cy="46.5" r="6" fill="#fff" stroke="#888" stroke-width="0.7"/><ellipse cx="690.5" cy="46.5" rx="2.5" ry="6" fill="none" stroke="#888" stroke-width="0.6"/><line x1="684.5" y1="46.5" x2="696.5" y2="46.5" stroke="#888" stroke-width="0.6"/><rect x="689" y="51.5" width="5.5" height="3.5" rx="1.7" fill="none" stroke="#2e75b6" stroke-width="1.2"/><rect x="693" y="51.5" width="5.5" height="3.5" rx="1.7" fill="none" stroke="#2e75b6" stroke-width="1.2"/><rect x="720.3" y="41.5" width="16.5" height="13.5" fill="#fff" stroke="#999" stroke-width="0.7"/><text x="722" y="49" font-size="6.5" font-weight="bold" fill="#2e75b6" font-family="Liberation Sans">A</text><line x1="727" y1="47" x2="735" y2="47" stroke="#aaa" stroke-width="0.6"/><line x1="727" y1="49.5" x2="735" y2="49.5" stroke="#aaa" stroke-width="0.6"/><line x1="727" y1="52" x2="735" y2="52" stroke="#aaa" stroke-width="0.6"/><path d="M750 41.5 H759.5 L763 45 V57 H750Z" fill="#fff" stroke="#999" stroke-width="0.7"/><rect x="751.5" y="43.5" width="6" height="1.4" fill="#f3b14a"/><rect x="751.5" y="53.5" width="10" height="1.4" fill="#f3b14a"/><text x="773" y="48" font-size="8" font-style="italic" font-weight="bold" fill="#2e75b6" font-family="Liberation Sans">A</text><rect x="773.5" y="54" width="8" height="7" fill="#fff" stroke="#888" stroke-width="0.7"/><path d="M775 60 L781 54.5" stroke="#2e75b6" stroke-width="1"/><rect x="771.5" y="68" width="6" height="5" fill="#fff" stroke="#888" stroke-width="0.7"/><rect x="773.5" y="70" width="7" height="6" fill="#fff" stroke="#888" stroke-width="0.7"/><path d="M782 45 L783.3 46.3 L784.6 45" fill="none" stroke="#888" stroke-width="0.7"/><path d="M783 58 L784.3 59.3 L785.6 58" fill="none" stroke="#888" stroke-width="0.7"/><text x="802.5" y="49.5" font-size="12" font-weight="bold" fill="#2e75b6" font-family="Liberation Serif">π</text><text x="802.5" y="61.5" font-size="10.5" font-weight="bold" fill="#2e75b6" font-family="Liberation Sans">Ω</text><path d="M933.5 86 L936 83.5 L938.5 86" fill="none" stroke="#666" stroke-width="0.8"/></svg>
<span class="t f" style="transform:scaleX(0.7143);left:86.5px;top:60.8px;font-size:7.4px;color:#444;--w:20px;">ピボット</span>
<span class="t f" style="transform:scaleX(0.7857);left:85.7px;top:69.3px;font-size:7.4px;color:#444;--w:22px;">テーブル</span>
<span class="t f" style="transform:scaleX(0.8214);left:120.0px;top:60.8px;font-size:7.4px;color:#444;--w:23px;">おすすめ</span>
<span class="t f" style="transform:scaleX(0.7321);left:110.8px;top:69.3px;font-size:7.4px;color:#444;--w:41px;">ピボットテーブル</span>
<span class="t f" style="transform:scaleX(0.7857);left:155.0px;top:60.8px;font-size:7.4px;color:#444;--w:22px;">テーブル</span>
<span class="t f" style="transform:scaleX(0.7857);left:120.3px;top:81.3px;font-size:7.4px;color:#444;--w:22px;">テーブル</span>
<span class="t f" style="transform:scaleX(1.0000);left:193.0px;top:60.3px;font-size:7.4px;color:#444;--w:14px;">画像</span>
<svg class="a" style="left:0;top:0" width="1024" height="576"><path d="M198.5 72.8 L200 74.3 L201.5 72.8" fill="none" stroke="#888" stroke-width="0.8"/></svg>
<span class="t f" style="transform:scaleX(1.0000);left:224.0px;top:40.6px;font-size:7.4px;color:#444;--w:14px;">図形</span>
<span class="t f" style="transform:scaleX(1.0152);left:224.0px;top:54.3px;font-size:7.4px;color:#444;--w:29.6px;;-webkit-text-stroke:0">SmartArt</span>
<span class="t f" style="transform:scaleX(0.6667);left:224.0px;top:67.3px;font-size:7.4px;color:#444;--w:42px;">スクリーンショット</span>
<svg class="a" style="left:0;top:0" width="1024" height="576"><path d="M240.5 43.8 L242 45.3 L243.5 43.8" fill="none" stroke="#888" stroke-width="0.8"/></svg>
<svg class="a" style="left:0;top:0" width="1024" height="576"><path d="M269.8 70.5 L271.3 72.0 L272.8 70.5" fill="none" stroke="#888" stroke-width="0.8"/></svg>
<svg class="a" style="left:0;top:0" width="1024" height="576"><path d="M345.8 66.89999999999999 L347.3 68.39999999999999 L348.8 66.89999999999999" fill="none" stroke="#888" stroke-width="0.8"/></svg>
<span class="t f" style="transform:scaleX(1.0000);left:228.8px;top:81.3px;font-size:7.4px;color:#444;--w:7px;">図</span>
<span class="t f" style="transform:scaleX(0.8163);left:298.0px;top:46.2px;font-size:7.4px;color:#444;--w:40px;">アドインを入手</span>
<span class="t f" style="transform:scaleX(0.8367);left:299.0px;top:63.8px;font-size:7.4px;color:#444;--w:41px;">個人用アドイン</span>
<span class="t f" style="transform:scaleX(0.7143);left:315.0px;top:81.3px;font-size:7.4px;color:#444;--w:20px;">アドイン</span>
<span class="t f" style="transform:scaleX(0.8571);left:373.0px;top:60.8px;font-size:7.4px;color:#444;--w:24px;">おすすめ</span>
<span class="t f" style="transform:scaleX(0.6667);left:378.0px;top:69.3px;font-size:7.4px;color:#444;--w:14px;">グラフ</span>
<span class="t f" style="transform:scaleX(0.9524);left:540.0px;top:60.7px;font-size:7.4px;color:#444;--w:20px;">折れ線</span>
<span class="t f" style="transform:scaleX(1.0000);left:567.0px;top:60.7px;font-size:7.4px;color:#444;--w:14px;">縦棒</span>
<span class="t f" style="transform:scaleX(1.0000);left:591.0px;top:60.7px;font-size:7.4px;color:#444;--w:14px;">勝敗</span>
<span class="t f" style="transform:scaleX(0.7224);left:556.0px;top:81.7px;font-size:7.4px;color:#444;--w:35.4px;">スパークライン</span>
<span class="t f" style="transform:scaleX(0.7429);left:620.0px;top:60.7px;font-size:7.4px;color:#444;--w:26px;">スライサー</span>
<span class="t f" style="transform:scaleX(0.7143);left:653.0px;top:60.7px;font-size:7.4px;color:#444;--w:15px;">タイム</span>
<span class="t f" style="transform:scaleX(0.7143);left:653.0px;top:69.3px;font-size:7.4px;color:#444;--w:15px;">ライン</span>
<span class="t f" style="transform:scaleX(0.7057);left:632.2px;top:81.5px;font-size:7.4px;color:#444;--w:24.7px;">フィルター</span>
<span class="t f" style="transform:scaleX(0.7857);left:686.0px;top:60.7px;font-size:7.4px;color:#444;--w:11px;">リン</span>
<span class="t f" style="transform:scaleX(0.7143);left:689.0px;top:69.3px;font-size:7.4px;color:#444;--w:5px;">ク</span>
<span class="t f" style="transform:scaleX(0.6667);left:685.0px;top:81.5px;font-size:7.4px;color:#444;--w:14px;">リンク</span>
<span class="t f" style="transform:scaleX(0.7857);left:717.0px;top:60.6px;font-size:7.4px;color:#444;--w:22px;">テキスト</span>
<span class="t f" style="transform:scaleX(0.6071);left:715.0px;top:69.3px;font-size:7.4px;color:#444;--w:17px;">ボックス</span>
<svg class="a" style="left:0;top:0" width="1024" height="576"><path d="M737.5 72.5 L739 74.0 L740.5 72.5" fill="none" stroke="#888" stroke-width="0.8"/></svg>
<span class="t f" style="transform:scaleX(0.7143);left:743.0px;top:60.6px;font-size:7.4px;color:#444;--w:25px;">ヘッダーと</span>
<span class="t f" style="transform:scaleX(0.6071);left:747.0px;top:69.3px;font-size:7.4px;color:#444;--w:17px;">フッター</span>
<span class="t f" style="transform:scaleX(0.7643);left:741.3px;top:81.5px;font-size:7.4px;color:#444;--w:21.4px;">テキスト</span>
<span class="t f" style="transform:scaleX(0.9286);left:813.0px;top:41.3px;font-size:7.4px;color:#444;--w:13px;">数式</span>
<svg class="a" style="left:0;top:0" width="1024" height="576"><path d="M833.5 44.5 L835 46.0 L836.5 44.5" fill="none" stroke="#888" stroke-width="0.8"/></svg>
<span class="t f" style="transform:scaleX(0.9265);left:813.0px;top:53.3px;font-size:7.4px;color:#444;--w:45.4px;">記号と特殊文字</span>
<span class="t f" style="transform:scaleX(0.9245);left:808.4px;top:81.5px;font-size:7.4px;color:#444;--w:45.3px;">記号と特殊文字</span>
<div class="a" style="left:83px;top:96.2px;width:58.5px;height:15px;background:#fff"></div>
<div class="a" style="left:159.7px;top:96.2px;width:61.3px;height:15px;background:#fff"></div>
<div class="a" style="left:224px;top:96.2px;width:717.3px;height:15px;background:#fff"></div>
<div class="t" style="left:85.5px;top:99.5px;font-size:9.2px;color:#555">D2</div>
<span class="t f" style="transform:scaleX(0.9167);left:231.2px;top:99.7px;font-size:8.6px;color:#555;--w:16.5px;-webkit-text-stroke:0">３月</span>
<svg class="a" style="left:0;top:0" width="1024" height="576"><path d="M136 103.5 L137.2 104.7 L138.4 103.5Z" fill="#555"/><circle cx="150" cy="101" r="0.5" fill="#888"/><circle cx="150" cy="103.5" r="0.5" fill="#888"/><circle cx="150" cy="106" r="0.5" fill="#888"/><path d="M167 101 L172 106 M172 101 L167 106" stroke="#aaa" stroke-width="0.8"/><path d="M187.6 103.8 L190 106.6 L194.5 100.8" fill="none" stroke="#aaa" stroke-width="0.8"/><text x="208" y="107.2" font-size="9" font-style="italic" fill="#555" font-family="Liberation Serif">fx</text><path d="M933 102.5 L935.2 104.7 L937.4 102.5" fill="none" stroke="#666" stroke-width="0.9"/></svg>
<svg class="a" style="left:0;top:0" width="1024" height="576"><rect x="400.5" y="52.5" width="130" height="195" fill="#000" opacity="0.06"/><rect x="399.5" y="51.5" width="130" height="195" fill="#fff" stroke="#c8c8c8" stroke-width="1"/><rect x="400" y="52" width="129" height="12.5" fill="#e8e8e8"/><rect x="400" y="96.8" width="129" height="12.5" fill="#e8e8e8"/><rect x="400" y="142.3" width="129" height="11.7" fill="#e8e8e8"/><rect x="400" y="187" width="129" height="11.5" fill="#e8e8e8"/><line x1="400" y1="229.5" x2="529" y2="229.5" stroke="#e0e0e0" stroke-width="1"/><rect x="465.2" y="64.4" width="31" height="32.2" fill="#e1e1df"/><path d="M404.9 70.3 V91 H427.3" fill="none" stroke="#777" stroke-width="0.6"/><rect x="407.3" y="79.3" width="3.8" height="11.7" fill="#fff" stroke="#777" stroke-width="0.6"/><rect x="411.2" y="73.8" width="4.4" height="17.2" fill="#d6d6d6" stroke="#777" stroke-width="0.6"/><rect x="417.6" y="75.3" width="3.9" height="15.7" fill="#fff" stroke="#777" stroke-width="0.6"/><rect x="421.5" y="79.3" width="4.3" height="11.7" fill="#d6d6d6" stroke="#777" stroke-width="0.6"/><path d="M437.1 70.3 V91 H459.6" fill="none" stroke="#777" stroke-width="0.6"/><rect x="441.2" y="74.6" width="6.6" height="10.3" fill="#d6d6d6" stroke="#777" stroke-width="0.6"/><rect x="441.2" y="84.9" width="6.6" height="6.1" fill="#fff" stroke="#777" stroke-width="0.6"/><rect x="450.3" y="71.2" width="6.3" height="10.8" fill="#d6d6d6" stroke="#777" stroke-width="0.6"/><rect x="450.3" y="82" width="6.3" height="9" fill="#fff" stroke="#777" stroke-width="0.6"/><path d="M469.5 70.3 V91 H491.8" fill="none" stroke="#777" stroke-width="0.6"/><rect x="473.4" y="71.2" width="6.6" height="9" fill="#d6d6d6" stroke="#777" stroke-width="0.6"/><rect x="473.4" y="80.2" width="6.6" height="10.8" fill="#fff" stroke="#777" stroke-width="0.6"/><rect x="482.4" y="71.2" width="6.4" height="10.3" fill="#d6d6d6" stroke="#777" stroke-width="0.6"/><rect x="482.4" y="81.5" width="6.4" height="9.5" fill="#fff" stroke="#777" stroke-width="0.6"/><path d="M407.8 115 V132 M404.8 135 L408.8 131 M407.8 136 H427.8" fill="none" stroke="#999" stroke-width="0.6"/><path d="M440.3 115 V132 M437.3 135 L441.3 131 M440.3 136 H460.3" fill="none" stroke="#999" stroke-width="0.6"/><path d="M472.5 115 V132 M469.5 135 L473.5 131 M472.5 136 H492.5" fill="none" stroke="#999" stroke-width="0.6"/><path d="M409.5 125 L411.1 123.4 H414.1 V134.4 L412.5 136" fill="#fff" stroke="#777" stroke-width="0.6"/><rect x="409.5" y="125" width="3" height="11" fill="#fff" stroke="#777" stroke-width="0.6"/><path d="M413 119.5 L414.6 117.9 H419.1 V134.4 L417.5 136.0" fill="#d6d6d6" stroke="#777" stroke-width="0.6"/><rect x="413" y="119.5" width="4.5" height="16.5" fill="#d6d6d6" stroke="#777" stroke-width="0.6"/><path d="M419 120.5 L420.6 118.9 H424.1 V134.4 L422.5 136.0" fill="#fff" stroke="#777" stroke-width="0.6"/><rect x="419" y="120.5" width="3.5" height="15.5" fill="#fff" stroke="#777" stroke-width="0.6"/><path d="M422.5 124.5 L424.1 122.9 H428.1 V134.4 L426.5 136.0" fill="#d6d6d6" stroke="#777" stroke-width="0.6"/><rect x="422.5" y="124.5" width="4" height="11.5" fill="#d6d6d6" stroke="#777" stroke-width="0.6"/><path d="M442.3 121 L443.90000000000003 119.4 H449.90000000000003 V129.4 L448.3 131" fill="#d6d6d6" stroke="#777" stroke-width="0.6"/><rect x="442.3" y="121" width="6" height="10" fill="#d6d6d6" stroke="#777" stroke-width="0.6"/><path d="M442.3 131 L443.90000000000003 129.4 H449.90000000000003 V134.4 L448.3 136" fill="#fff" stroke="#777" stroke-width="0.6"/><rect x="442.3" y="131" width="6" height="5" fill="#fff" stroke="#777" stroke-width="0.6"/><path d="M451.5 116 L453.1 114.4 H459.6 V124.4 L458.0 126" fill="#d6d6d6" stroke="#777" stroke-width="0.6"/><rect x="451.5" y="116" width="6.5" height="10" fill="#d6d6d6" stroke="#777" stroke-width="0.6"/><path d="M451.5 126 L453.1 124.4 H459.6 V134.4 L458.0 136" fill="#fff" stroke="#777" stroke-width="0.6"/><rect x="451.5" y="126" width="6.5" height="10" fill="#fff" stroke="#777" stroke-width="0.6"/><path d="M474.5 116 L476.1 114.4 H482.1 V129.4 L480.5 131" fill="#d6d6d6" stroke="#777" stroke-width="0.6"/><rect x="474.5" y="116" width="6" height="15" fill="#d6d6d6" stroke="#777" stroke-width="0.6"/><path d="M474.5 131 L476.1 129.4 H482.1 V134.4 L480.5 136" fill="#fff" stroke="#777" stroke-width="0.6"/><rect x="474.5" y="131" width="6" height="5" fill="#fff" stroke="#777" stroke-width="0.6"/><path d="M404.9 159.5 V181 H427.8" fill="none" stroke="#777" stroke-width="0.6"/><rect x="404.9" y="160" width="11.6" height="4.5" fill="#fff" stroke="#777" stroke-width="0.6"/><rect x="404.9" y="164.5" width="17.6" height="4.5" fill="#d6d6d6" stroke="#777" stroke-width="0.6"/><rect x="404.9" y="169" width="15.6" height="4.5" fill="#fff" stroke="#777" stroke-width="0.6"/><rect x="404.9" y="173.5" width="11.6" height="4.5" fill="#d6d6d6" stroke="#777" stroke-width="0.6"/><path d="M436.6 159.5 V181 H459.7" fill="none" stroke="#777" stroke-width="0.6"/><rect x="436.8" y="162" width="6" height="6.5" fill="#fff" stroke="#777" stroke-width="0.6"/><rect x="442.8" y="162" width="10" height="6.5" fill="#d6d6d6" stroke="#777" stroke-width="0.6"/><rect x="436.8" y="172" width="9" height="6.5" fill="#fff" stroke="#777" stroke-width="0.6"/><rect x="445.8" y="172" width="11" height="6.5" fill="#d6d6d6" stroke="#777" stroke-width="0.6"/><path d="M469.3 159.5 V181 H492" fill="none" stroke="#777" stroke-width="0.6"/><rect x="469.5" y="162" width="5.5" height="6.5" fill="#fff" stroke="#777" stroke-width="0.6"/><rect x="475" y="162" width="14.5" height="6.5" fill="#d6d6d6" stroke="#777" stroke-width="0.6"/><rect x="469.5" y="172" width="8.5" height="6.5" fill="#fff" stroke="#777" stroke-width="0.6"/><rect x="478" y="172" width="10.5" height="6.5" fill="#d6d6d6" stroke="#777" stroke-width="0.6"/><path d="M403.9 225.5 L407.9 221.5 H427.9" fill="none" stroke="#999" stroke-width="0.6"/><path d="M435.6 225.5 L439.6 221.5 H459.6" fill="none" stroke="#999" stroke-width="0.6"/><path d="M468.3 225.5 L472.3 221.5 H492.3" fill="none" stroke="#999" stroke-width="0.6"/><path d="M405 206 L406.5 204.5 H416.5 V207.5 L415 209" fill="#fff" stroke="#777" stroke-width="0.6"/><rect x="405" y="206" width="10" height="3" fill="#fff" stroke="#777" stroke-width="0.6"/><path d="M405 209.5 L406.5 208.0 H423.0 V211.0 L421.5 212.5" fill="#d6d6d6" stroke="#777" stroke-width="0.6"/><rect x="405" y="209.5" width="16.5" height="3" fill="#d6d6d6" stroke="#777" stroke-width="0.6"/><path d="M405 214.5 L406.5 213.0 H421.5 V216.0 L420 217.5" fill="#fff" stroke="#777" stroke-width="0.6"/><rect x="405" y="214.5" width="15" height="3" fill="#fff" stroke="#777" stroke-width="0.6"/><path d="M405 218 L406.5 216.5 H417.5 V219.5 L416 221" fill="#d6d6d6" stroke="#777" stroke-width="0.6"/><rect x="405" y="218" width="11" height="3" fill="#d6d6d6" stroke="#777" stroke-width="0.6"/><path d="M437.5 208 L439.0 206.5 H443.5 V211.0 L442.0 212.5" fill="#fff" stroke="#777" stroke-width="0.6"/><rect x="437.5" y="208" width="4.5" height="4.5" fill="#fff" stroke="#777" stroke-width="0.6"/><path d="M442 208 L443.5 206.5 H453.5 V211.0 L452 212.5" fill="#d6d6d6" stroke="#777" stroke-width="0.6"/><rect x="442" y="208" width="10" height="4.5" fill="#d6d6d6" stroke="#777" stroke-width="0.6"/><path d="M437.5 216.5 L439.0 215.0 H447.0 V219.5 L445.5 221.0" fill="#fff" stroke="#777" stroke-width="0.6"/><rect x="437.5" y="216.5" width="8" height="4.5" fill="#fff" stroke="#777" stroke-width="0.6"/><path d="M445.5 216.5 L447.0 215.0 H458.0 V219.5 L456.5 221.0" fill="#d6d6d6" stroke="#777" stroke-width="0.6"/><rect x="445.5" y="216.5" width="11" height="4.5" fill="#d6d6d6" stroke="#777" stroke-width="0.6"/><path d="M470 208 L471.5 206.5 H476.5 V211.0 L475 212.5" fill="#fff" stroke="#777" stroke-width="0.6"/><rect x="470" y="208" width="5" height="4.5" fill="#fff" stroke="#777" stroke-width="0.6"/><path d="M475 208 L476.5 206.5 H490.5 V211.0 L489 212.5" fill="#d6d6d6" stroke="#777" stroke-width="0.6"/><rect x="475" y="208" width="14" height="4.5" fill="#d6d6d6" stroke="#777" stroke-width="0.6"/><path d="M470 216.5 L471.5 215.0 H479.5 V219.5 L478 221.0" fill="#fff" stroke="#777" stroke-width="0.6"/><rect x="470" y="216.5" width="8" height="4.5" fill="#fff" stroke="#777" stroke-width="0.6"/><path d="M478 216.5 L479.5 215.0 H490.0 V219.5 L488.5 221.0" fill="#d6d6d6" stroke="#777" stroke-width="0.6"/><rect x="478" y="216.5" width="10.5" height="4.5" fill="#d6d6d6" stroke="#777" stroke-width="0.6"/><rect x="402.5" y="238" width="7.5" height="6" fill="#fff" stroke="#888" stroke-width="0.6"/><rect x="404" y="240" width="1.2" height="3.5" fill="#888"/><rect x="406" y="239" width="1.2" height="4.5" fill="#888"/><circle cx="476" cy="75.1" r="7" fill="#f26b5b" opacity="0.9"/><path d="M476.5 73.5 V83 L478.6 81 L480.2 84.5 L481.6 83.8 L480 80.5 H483 Z" fill="#fff" stroke="#222" stroke-width="0.6"/></svg>
<span class="t f" style="transform:scaleX(0.9124);left:405.8px;top:54.3px;font-size:8px;color:#444;--w:28.4px;">2-D 縦棒</span>
<span class="t f" style="transform:scaleX(0.9124);left:405.8px;top:99.0px;font-size:8px;color:#444;--w:28.4px;">3-D 縦棒</span>
<span class="t f" style="transform:scaleX(0.9124);left:405.8px;top:144.2px;font-size:8px;color:#444;--w:28.4px;">2-D 横棒</span>
<span class="t f" style="transform:scaleX(0.9124);left:405.8px;top:188.8px;font-size:8px;color:#444;--w:28.4px;">3-D 横棒</span>
<span class="t f" style="transform:scaleX(0.8723);left:419.0px;top:237.3px;font-size:7.4px;color:#444;--w:70px;">その他の縦棒グラフ(M)...</span>
<div class="a" style="left:483.5px;top:95px;width:114px;height:66px;background:#000;opacity:0.08"></div>
<div class="a" style="left:482.6px;top:94px;width:113.4px;height:65px;background:#fff;border:1px solid #c6c6c6"></div>
<span class="t f" style="transform:scaleX(0.9937);left:489.8px;top:99.0px;font-size:7.2px;color:#444;--w:62px;-webkit-text-stroke:0.35px">100% 積み上げ縦棒</span>
<span class="t f" style="transform:scaleX(0.8499);left:489.5px;top:111.5px;font-size:7px;color:#5a5a5a;--w:79px;-webkit-text-stroke:0.05px">この種類のグラフの使用目的:</span>
<span class="t f" style="transform:scaleX(0.8712);left:489.5px;top:120.2px;font-size:7px;color:#5a5a5a;--w:97px;-webkit-text-stroke:0.05px">•&nbsp; 全体に対する値の割合を比較しま</span>
<span class="t f" style="transform:scaleX(0.5357);left:489.5px;top:128.8px;font-size:7px;color:#5a5a5a;--w:7.5px;-webkit-text-stroke:0.05px">す。</span>
<span class="t f" style="transform:scaleX(0.8712);left:489.5px;top:137.7px;font-size:7px;color:#5a5a5a;--w:97px;-webkit-text-stroke:0.05px">•&nbsp; 全体に対する値の割合が時間とと</span>
<span class="t f" style="transform:scaleX(0.7698);left:489.5px;top:146.2px;font-size:7px;color:#5a5a5a;--w:97px;-webkit-text-stroke:0.05px">もにどのように変化するかを示します。</span>
<svg class="a" style="left:0;top:0" width="1024" height="576"><rect x="932.5" y="117" width="11.5" height="411.5" fill="#fff"/><line x1="932.8" y1="117" x2="932.8" y2="528.5" stroke="#c8c8c8" stroke-width="1"/><rect x="933.3" y="504.7" width="10.7" height="14.6" fill="#dadada"/><rect x="933.3" y="117" width="10.7" height="1.2" fill="#e6e6e6"/><rect x="933.3" y="127.3" width="10.7" height="1" fill="#e6e6e6"/><path d="M936 124.5 L938.3 122 L940.6 124.5Z" fill="#555"/><path d="M936 522.8 L938.3 525.3 L940.6 522.8Z" fill="#555"/><rect x="80" y="528.5" width="864" height="11.5" fill="#e6e6e6"/><line x1="80" y1="528.4" x2="944" y2="528.4" stroke="#c6c6c6" stroke-width="1"/><path d="M96 533 L94 534.3 L96 535.6 M104 533 L106 534.3 L104 535.6" fill="none" stroke="#b9b9b9" stroke-width="0.7"/><rect x="121.9" y="528.6" width="37" height="11" fill="#fff"/><line x1="122.5" y1="538.8" x2="158.3" y2="538.8" stroke="#217346" stroke-width="1.2"/><line x1="121.9" y1="528.6" x2="121.9" y2="539.5" stroke="#c6c6c6" stroke-width="0.6"/><line x1="158.9" y1="528.6" x2="158.9" y2="539.5" stroke="#c6c6c6" stroke-width="0.6"/><circle cx="177" cy="534.4" r="3.7" fill="none" stroke="#777" stroke-width="0.7"/><path d="M175 534.4 H179 M177 532.4 V536.4" stroke="#777" stroke-width="0.7"/><circle cx="596.6" cy="531.8" r="0.4" fill="#888"/><circle cx="596.6" cy="534.3" r="0.4" fill="#888"/><circle cx="596.6" cy="536.8" r="0.4" fill="#888"/><rect x="604" y="529.5" width="8.7" height="9.2" fill="#fff"/><path d="M609.2 532.4 L606.8 534.3 L609.2 536.2Z" fill="#444"/><rect x="613.5" y="529.5" width="294" height="9.2" fill="#fff"/><rect x="923.7" y="529.5" width="8.3" height="9.2" fill="#fff"/><path d="M926.8 532.4 L929.2 534.3 L926.8 536.2Z" fill="#444"/><rect x="80" y="540.2" width="864" height="12.8" fill="#f3f3f3"/><line x1="80" y1="540.3" x2="944" y2="540.3" stroke="#dadada" stroke-width="0.6"/><rect x="722" y="543" width="6.5" height="5" fill="#444"/><rect x="726" y="546.5" width="4" height="3.5" fill="#444" stroke="#f3f3f3" stroke-width="0.6"/><rect x="769" y="540.5" width="22.6" height="12.5" fill="#d6d6d6"/><rect x="776.5" y="543" width="8" height="7" fill="none" stroke="#999" stroke-width="0.6"/><path d="M776.5 545.3 H784.5 M776.5 547.7 H784.5 M779.2 543 V550 M781.8 543 V550" stroke="#999" stroke-width="0.5"/><rect x="799.5" y="543" width="7.5" height="7" fill="none" stroke="#888" stroke-width="0.6"/><rect x="801" y="544.3" width="4.5" height="4.5" fill="none" stroke="#888" stroke-width="0.5"/><rect x="822.5" y="543" width="7.5" height="7" fill="none" stroke="#888" stroke-width="0.6"/><path d="M822.5 546.5 H826 V543" fill="none" stroke="#888" stroke-width="0.5"/><path d="M841.5 546.6 H844" stroke="#888" stroke-width="0.7"/><line x1="849" y1="546.6" x2="908" y2="546.6" stroke="#aaa" stroke-width="0.7"/><rect x="875.5" y="543.5" width="2.2" height="6.2" fill="#555"/><path d="M909 546.6 H912.5 M910.75 544.8 V548.4" stroke="#888" stroke-width="0.7"/><rect x="80" y="553" width="864" height="23" fill="#1c2e3c"/><path d="M89.6 560.6 L93.5 560 V564.4 H89.6Z M94.2 559.9 L98.3 559.3 V564.4 H94.2Z M89.6 565.1 H93.5 V569.5 L89.6 569Z M94.2 565.1 H98.3 V570.2 L94.2 569.6Z" fill="#fff"/><rect x="107.4" y="553" width="197.3" height="23" fill="#f0f0f0"/><circle cx="120.3" cy="563.5" r="2.8" fill="none" stroke="#333" stroke-width="0.9"/><path d="M118.3 565.6 L115 569" stroke="#333" stroke-width="1"/><circle cx="318.7" cy="565" r="3.8" fill="none" stroke="#fff" stroke-width="1.1"/><path d="M342 560 V570 M350 560 V570 M343.5 561.5 H348.5 V568.5 H343.5Z" fill="none" stroke="#dfe3e6" stroke-width="0.9"/><path d="M370 560 H375 L376.5 561.5 H383 V570 H370Z" fill="#f0b93a"/><rect x="370" y="563" width="13" height="4" fill="#2e8ee0"/><rect x="370" y="567" width="13" height="3" fill="#f5c24a"/><rect x="397.5" y="558.5" width="13" height="12" fill="#1e7fd6"/><path d="M397.5 570.5 L402 565 L405 567.5 L407.5 565 L410.5 570.5Z" fill="#0f4f8f"/><path d="M428 562 H438.5 V571.5 H428Z" fill="#f7f7f7"/><path d="M430.5 562 V560 Q433.2 557.5 436 560 V562" fill="none" stroke="#f7f7f7" stroke-width="0.9"/><rect x="431" y="564" width="2" height="2" fill="#f25022"/><rect x="433.6" y="564" width="2" height="2" fill="#7fba00"/><rect x="431" y="566.6" width="2" height="2" fill="#00a4ef"/><rect x="433.6" y="566.6" width="2" height="2" fill="#ffb900"/><circle cx="461.5" cy="565" r="6" fill="#1b9de2"/><path d="M456 566 Q458 559 464.5 560 Q467.5 561.5 467 565 H460 Q460.5 568.5 465 569 Q462 571.5 458.5 569.5Z" fill="#45c65a" opacity="0.9"/><circle cx="462.5" cy="565.5" r="2" fill="#1c2e3c"/><path d="M485 569 L487 559.5 H495 L493 569Z" fill="#cfe3f1"/><path d="M486.5 568 L488 561 H493.5" fill="none" stroke="#7aa9cf" stroke-width="0.8"/><circle cx="519" cy="565" r="5.6" fill="#fde910"/><path d="M544 559 L549 562.5 L553 559.5 L551 566 L553.5 570.5 L548 568 L543.5 570.5 L546 565.5Z" fill="#bcd1ee"/><path d="M548 565 V571 L549.5 569.8 L550.5 572 L551.3 571.6 L550.3 569.5 H552Z" fill="#fff" stroke="#222" stroke-width="0.4"/><rect x="570" y="560.3" width="12.5" height="9.5" fill="#1c8de0"/><path d="M570 560.5 L576.25 566 L582.5 560.5" fill="none" stroke="#fff" stroke-width="0.9"/><rect x="598" y="559" width="12" height="12" fill="#21313c"/><path d="M601 561 L606 565 L601 569" fill="none" stroke="#3ad29f" stroke-width="2"/><rect x="621" y="553" width="27.8" height="23" fill="#4a5863"/><rect x="628" y="559" width="12" height="12" fill="#1e9f5a"/><rect x="634" y="559" width="6" height="12" fill="#35c27a"/><rect x="626" y="561" width="8" height="8" fill="#16703f"/><text x="627.6" y="567.8" font-size="6.2" font-weight="bold" fill="#fff" font-family="Liberation Sans">X</text><rect x="655" y="559.5" width="11" height="8" rx="1.5" fill="#2aa3d8"/><path d="M666 562.5 L669.5 560.5 V566.5 L666 564.5Z" fill="#2aa3d8"/><circle cx="660.5" cy="563.5" r="2.2" fill="#e5322d"/><path d="M660.5 567.5 V570 M657 570.5 H664" stroke="#2aa3d8" stroke-width="0.9"/><rect x="508.5" y="574.8" width="21.5" height="1.2" fill="#8ec6ef"/><rect x="594.5" y="574.8" width="21.5" height="1.2" fill="#8ec6ef"/><rect x="621.8" y="574.8" width="25.700000000000045" height="1.2" fill="#8ec6ef"/><rect x="649" y="574.8" width="27.5" height="1.2" fill="#8ec6ef"/><path d="M709.5 566.5 L712.5 563.5 L715.5 566.5" fill="none" stroke="#e8ecef" stroke-width="0.9"/><path d="M727 563.5 H729 L731.5 561 V569.5 L729 567 H727Z" fill="none" stroke="#e8ecef" stroke-width="0.8"/><path d="M733 563 Q734.3 565.2 733 567.4 M734.8 561.8 Q737 565.2 734.8 568.6" fill="none" stroke="#e8ecef" stroke-width="0.7"/><rect x="746.5" y="561" width="5" height="8" fill="none" stroke="#e8ecef" stroke-width="0.8"/><circle cx="787.5" cy="567" r="2" fill="#e84a3f"/><circle cx="858" cy="564.7" r="3.8" fill="#1e78d8"/><circle cx="860.5" cy="567" r="1.8" fill="#f2a23a"/><path d="M920 560.5 H928.5 V567.5 H925 L922.5 569.5 V567.5 H920Z" fill="none" stroke="#e8ecef" stroke-width="0.8"/><path d="M921.8 562.5 H926.5 M921.8 564.7 H926.5" stroke="#e8ecef" stroke-width="0.6"/></svg>
<span class="t f" style="transform:scaleX(0.9643);left:127.0px;top:530.1px;font-size:8.4px;color:#217346;--w:25.6px;;-webkit-text-stroke:0">Sheet1</span>
<span class="t f" style="transform:scaleX(0.9286);left:84.0px;top:543.1px;font-size:7.4px;color:#444;--w:26px;">準備完了</span>
<span class="t f" style="transform:scaleX(0.9286);left:732.0px;top:543.1px;font-size:7.4px;color:#444;--w:26px;">表示設定</span>
<span class="t f" style="transform:scaleX(1.0289);left:920.0px;top:543.0px;font-size:7.6px;color:#444;--w:20px;;-webkit-text-stroke:0">100%</span>
<span class="t f" style="transform:scaleX(0.9167);left:130.3px;top:561.1px;font-size:8.4px;color:#333;--w:66px;">ここに入力して検索</span>
<span class="t f" style="transform:scaleX(0.8686);left:884.2px;top:555.1px;font-size:7.4px;color:#eef1f3;--w:12.5px;;-webkit-text-stroke:0">5:27</span>
<span class="t f" style="transform:scaleX(0.9730);left:872.5px;top:566.3px;font-size:7.4px;color:#eef1f3;--w:36px;;-webkit-text-stroke:0">2021/06/03</span>
<span class="t f" style="transform:scaleX(1.0407);left:756.5px;top:556.0px;font-size:13.5px;color:rgba(255,255,255,0.88);--w:90px;text-shadow:0 0 1.5px rgba(0,0,0,0.6);-webkit-text-stroke:0">©2021 saym.x</span>
<svg class="a" style="left:0;top:0" width="1024" height="576"><rect x="367.1" y="236.6" width="297.4" height="186.5" fill="none" stroke="#f00" stroke-width="4.3"/><rect x="374.2" y="271.2" width="32.8" height="112.2" rx="4" fill="none" stroke="#f00" stroke-width="4"/><rect x="118.7" y="251.3" width="201.7" height="63.6" rx="9" fill="#fff" stroke="#f00" stroke-width="4.8"/><line x1="322" y1="292" x2="372" y2="310" stroke="#f00" stroke-width="4"/></svg>
<span class="t f" style="transform:scaleX(1.0203);left:124.0px;top:275.5px;font-size:15px;color:#e8101a;--w:191px;font-weight:bold;-webkit-text-stroke:0.5px #e8101a;letter-spacing:0.6px">「表」が１００％とした時</span>
<script>document.querySelectorAll(".f").forEach(function(e){var w=parseFloat(e.style.getPropertyValue("--w"));e.style.transform="none";var a=e.getBoundingClientRect().width;if(a>0&&w>0){e.style.transform="scaleX("+(w/a)+")";}});</script>
</body></html>
